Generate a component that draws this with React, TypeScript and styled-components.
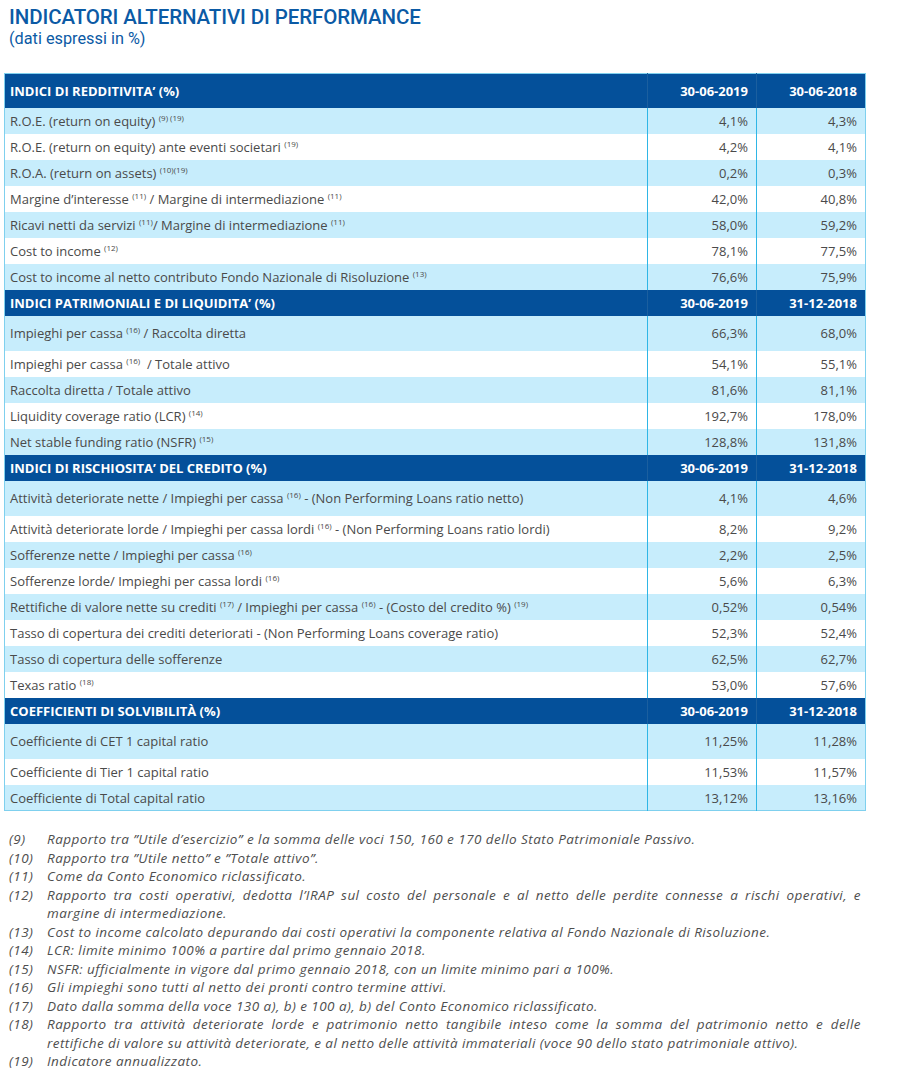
import React from "react";
import styled, { createGlobalStyle } from "styled-components";

const Global = createGlobalStyle`
  html, body { margin: 0; padding: 0; background: #ffffff; }
  body { font-family: "Open Sans", "Liberation Sans", Arial, sans-serif; color: #4a4a4a; }
`;

const Page = styled.div`
  width: 900px;
  padding: 5px 0 0 4px;
  box-sizing: border-box;
`;

const Title = styled.h1`
  margin: 0 0 0 5px;
  font-family: Roboto, "Liberation Sans", Arial, sans-serif;
  font-size: 20.5px;
  line-height: 24px;
  font-weight: 500;
  color: #0b5aa5;
  letter-spacing: -0.1px;
`;

const Subtitle = styled.div`
  margin: 0 0 0 5px;
  font-family: Roboto, "Liberation Sans", Arial, sans-serif;
  font-size: 16.3px;
  line-height: 19px;
  color: #0b5aa5;
`;

const Table = styled.table`
  margin-top: 25px;
  width: 861px;
  border-collapse: collapse;
  table-layout: fixed;
  border: 1px solid #7fd0ee;
`;

const HeadCell = styled.th<{ $num?: boolean }>`
  background: #04509a;
  color: #ffffff;
  font-size: 13px;
  font-weight: 700;
  padding: 0 8px 0 5px;
  text-align: ${(p) => (p.$num ? "right" : "left")};
  border-left: ${(p) => (p.$num ? "1px solid #1b5f9f" : "none")};
  white-space: nowrap;
`;

const Row = styled.tr<{ $alt: boolean; $tall?: boolean }>`
  background: ${(p) => (p.$alt ? "#c7edfc" : "#ffffff")};
  height: ${(p) => (p.$tall ? "34.5px" : "26.1px")};
`;

const HeadRow = styled.tr<{ $tall?: boolean }>`
  height: ${(p) => (p.$tall ? "34px" : "26px")};
`;

const Cell = styled.td`
  font-size: 13px;
  padding: 0 5px;
  white-space: nowrap;
  border-left: 1px solid #7fd0ee;
`;

const NumCell = styled.td`
  font-size: 13px;
  padding: 0 8px 0 5px;
  text-align: right;
  white-space: nowrap;
  border-left: 1px solid #2fb6e6;
`;

const Sup = styled.sup`
  font-size: 8px;
  vertical-align: 5px;
  line-height: 0;
`;

const Notes = styled.div`
  margin: 19px 0 0 5px;
  width: 852px;
  display: flex;
  flex-direction: column;
`;

const Note = styled.div`
  display: grid;
  grid-template-columns: 38px 1fr;
  font-size: 13.5px;
  line-height: 18.5px;
  letter-spacing: 0.45px;
  font-style: italic;
  color: #4e4e4e;
`;

const NoteText = styled.div<{ $justify?: boolean }>`
  text-align: ${(p) => (p.$justify ? "justify" : "left")};
`;

type Item = { label: React.ReactNode; a: string; b: string };
type Section = { title: string; d1: string; d2: string; tallHead?: boolean; tallFirst?: boolean; rows: Item[] };

const S = ({ n }: { n: string }) => <Sup>{n}</Sup>;

const sections: Section[] = [
  {
    title: "INDICI DI REDDITIVITA’ (%)",
    d1: "30-06-2019",
    d2: "30-06-2018",
    tallHead: true,
    rows: [
      { label: <>R.O.E. (return on equity) <S n="(9) (19)" /></>, a: "4,1%", b: "4,3%" },
      { label: <>R.O.E. (return on equity) ante eventi societari <S n="(19)" /></>, a: "4,2%", b: "4,1%" },
      { label: <>R.O.A. (return on assets) <S n="(10)(19)" /></>, a: "0,2%", b: "0,3%" },
      { label: <>Margine d’interesse <S n="(11)" /> / Margine di intermediazione <S n="(11)" /></>, a: "42,0%", b: "40,8%" },
      { label: <>Ricavi netti da servizi <S n="(11)" />/ Margine di intermediazione <S n="(11)" /></>, a: "58,0%", b: "59,2%" },
      { label: <>Cost to income <S n="(12)" /></>, a: "78,1%", b: "77,5%" },
      { label: <>Cost to income al netto contributo Fondo Nazionale di Risoluzione <S n="(13)" /></>, a: "76,6%", b: "75,9%" },
    ],
  },
  {
    title: "INDICI PATRIMONIALI E DI LIQUIDITA’ (%)",
    d1: "30-06-2019",
    d2: "31-12-2018",
    tallFirst: true,
    rows: [
      { label: <>Impieghi per cassa <S n="(16)" /> / Raccolta diretta</>, a: "66,3%", b: "68,0%" },
      { label: <>Impieghi per cassa <S n="(16)" />&nbsp; / Totale attivo</>, a: "54,1%", b: "55,1%" },
      { label: <>Raccolta diretta / Totale attivo</>, a: "81,6%", b: "81,1%" },
      { label: <>Liquidity coverage ratio (LCR) <S n="(14)" /></>, a: "192,7%", b: "178,0%" },
      { label: <>Net stable funding ratio (NSFR) <S n="(15)" /></>, a: "128,8%", b: "131,8%" },
    ],
  },
  {
    title: "INDICI DI RISCHIOSITA’ DEL CREDITO (%)",
    d1: "30-06-2019",
    d2: "31-12-2018",
    tallFirst: true,
    rows: [
      { label: <>Attività deteriorate nette / Impieghi per cassa <S n="(16)" /> - (Non Performing Loans ratio netto)</>, a: "4,1%", b: "4,6%" },
      { label: <>Attività deteriorate lorde / Impieghi per cassa lordi <S n="(16)" /> - (Non Performing Loans ratio lordi)</>, a: "8,2%", b: "9,2%" },
      { label: <>Sofferenze nette / Impieghi per cassa <S n="(16)" /></>, a: "2,2%", b: "2,5%" },
      { label: <>Sofferenze lorde/ Impieghi per cassa lordi <S n="(16)" /></>, a: "5,6%", b: "6,3%" },
      { label: <>Rettifiche di valore nette su crediti <S n="(17)" /> / Impieghi per cassa <S n="(16)" /> - (Costo del credito %) <S n="(19)" /></>, a: "0,52%", b: "0,54%" },
      { label: <>Tasso di copertura dei crediti deteriorati - (Non Performing Loans coverage ratio)</>, a: "52,3%", b: "52,4%" },
      { label: <>Tasso di copertura delle sofferenze</>, a: "62,5%", b: "62,7%" },
      { label: <>Texas ratio <S n="(18)" /></>, a: "53,0%", b: "57,6%" },
    ],
  },
  {
    title: "COEFFICIENTI DI SOLVIBILITÀ (%)",
    d1: "30-06-2019",
    d2: "31-12-2018",
    tallFirst: true,
    rows: [
      { label: <>Coefficiente di CET 1 capital ratio</>, a: "11,25%", b: "11,28%" },
      { label: <>Coefficiente di Tier 1 capital ratio</>, a: "11,53%", b: "11,57%" },
      { label: <>Coefficiente di Total capital ratio</>, a: "13,12%", b: "13,16%" },
    ],
  },
];

const notes: { n: string; t: string; j?: boolean }[] = [
  { n: "(9)", t: "Rapporto tra ”Utile d’esercizio” e la somma delle voci 150, 160 e 170 dello Stato Patrimoniale Passivo." },
  { n: "(10)", t: "Rapporto tra ”Utile netto” e ”Totale attivo”." },
  { n: "(11)", t: "Come da Conto Economico riclassificato." },
  { n: "(12)", t: "Rapporto tra costi operativi, dedotta l’IRAP sul costo del personale e al netto delle perdite connesse a rischi operativi, e margine di intermediazione.", j: true },
  { n: "(13)", t: "Cost to income calcolato depurando dai costi operativi la componente relativa al Fondo Nazionale di Risoluzione." },
  { n: "(14)", t: "LCR: limite minimo 100% a partire dal primo gennaio 2018." },
  { n: "(15)", t: "NSFR: ufficialmente in vigore dal primo gennaio 2018, con un limite minimo pari a 100%." },
  { n: "(16)", t: "Gli impieghi sono tutti al netto dei pronti contro termine attivi." },
  { n: "(17)", t: "Dato dalla somma della voce 130 a), b) e 100 a), b) del Conto Economico riclassificato." },
  { n: "(18)", t: "Rapporto tra attività deteriorate lorde e patrimonio netto tangibile inteso come la somma del patrimonio netto e delle rettifiche di valore su attività deteriorate, e al netto delle attività immateriali (voce 90 dello stato patrimoniale attivo).", j: true },
  { n: "(19)", t: "Indicatore annualizzato." },
];

export default function App() {
  return (
    <Page>
      <Global />
      <Title>INDICATORI ALTERNATIVI DI PERFORMANCE</Title>
      <Subtitle>(dati espressi in %)</Subtitle>
      <Table>
        <colgroup>
          <col style={{ width: 643 }} />
          <col style={{ width: 109 }} />
          <col style={{ width: 109 }} />
        </colgroup>
        <tbody>
          {sections.map((s) => (
            <React.Fragment key={s.title}>
              <HeadRow $tall={s.tallHead}>
                <HeadCell>{s.title}</HeadCell>
                <HeadCell $num>{s.d1}</HeadCell>
                <HeadCell $num>{s.d2}</HeadCell>
              </HeadRow>
              {s.rows.map((r, i) => (
                <Row key={i} $alt={i % 2 === 0} $tall={s.tallFirst && i === 0}>
                  <Cell>{r.label}</Cell>
                  <NumCell>{r.a}</NumCell>
                  <NumCell>{r.b}</NumCell>
                </Row>
              ))}
            </React.Fragment>
          ))}
        </tbody>
      </Table>
      <Notes>
        {notes.map((n) => (
          <Note key={n.n}>
            <span>{n.n}</span>
            <NoteText $justify={n.j}>{n.t}</NoteText>
          </Note>
        ))}
      </Notes>
    </Page>
  );
}
